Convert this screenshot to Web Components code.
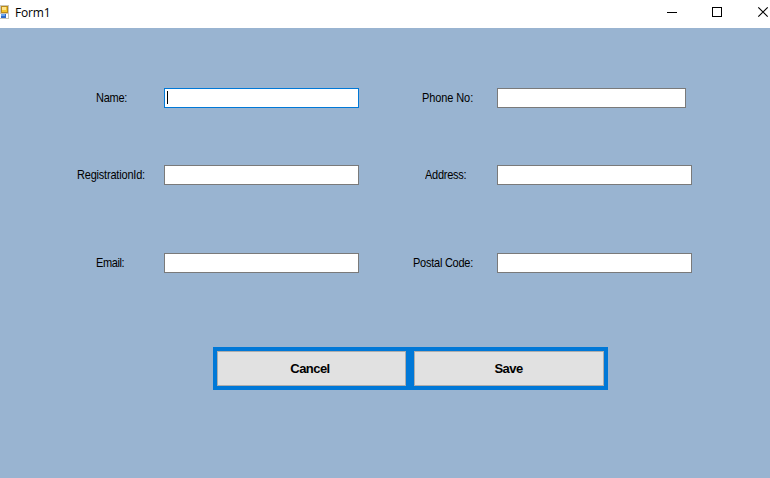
<!DOCTYPE html>
<html lang="en"><head><meta charset="utf-8"><title>Form1</title>
<style>html,body{margin:0;width:770px;height:478px;overflow:hidden;font-family:"Liberation Sans",sans-serif;color:#000}</style></head>
<body>
<form-window>
<title-bar slot="title">Form1</title-bar>
<field-row style="--top:60px">
<form-field label="Name:" style="--inset:96px;--tracking:-.25px" focused></form-field>
<form-field label="Phone No:" style="--inset:89px;--tracking:-.1px"></form-field>
</field-row>
<field-row style="--top:57px">
<form-field label="RegistrationId:" style="--inset:77px;--tracking:-.2px"></form-field>
<form-field label="Address:" style="--inset:92px;--tracking:-.25px"></form-field>
</field-row>
<field-row style="--top:68px">
<form-field label="Email:" style="--inset:96px;--tracking:-.4px"></form-field>
<form-field label="Postal Code:" style="--inset:80px;--tracking:-.25px"></form-field>
</field-row>
<button-strip>
<push-button>Cancel</push-button>
<push-button style="--shift:1px">Save</push-button>
</button-strip>
</form-window>
<script>
const define = (name, html, setup) => {
  const t = document.createElement('template');
  t.innerHTML = html;
  customElements.define(name, class extends HTMLElement {
    constructor(){ super(); this.attachShadow({mode:'open'}).append(t.content.cloneNode(true)); }
    connectedCallback(){ if (setup) setup(this, this.shadowRoot); }
  });
};
define('form-window', `<style>
:host{display:flex;flex-direction:column;width:770px;height:478px;background:#99b4d1}
main{display:flex;flex-direction:column;flex:1}
::slotted(field-row:nth-of-type(1)){--last-box:189px}
</style><slot name="title"></slot><main><slot></slot></main>`);
define('title-bar', `<style>
:host{display:flex;height:28px;background:#fff;font:12px/26px "Open Sans",sans-serif}
svg{display:block;flex:none}
.icon{margin:5px 6px 0 0}
span{flex:1;letter-spacing:-.2px}
</style>
<svg class="icon" width="9" height="14" viewBox="0 0 9 14" shape-rendering="crispEdges">
<path fill="#c9c5b8" d="M0 0h9v14H0z"/><path fill="#b98a1c" d="M1 1h7v7H1z"/><path fill="#f5c62c" d="M2 2h5v5H2z"/><path fill="#ffe58b" d="M2 2h4v3H2z"/>
<path fill="#fff" d="M0 9h8v4H0z"/><path fill="#2f6bc9" d="M1 9h5v4H1z"/><path fill="#6ca6ef" d="M1 9h4v2H1z"/></svg>
<span><slot></slot></span>
<svg width="103" height="28" viewBox="667 0 103 28" fill="none" stroke="#000">
<path d="M667 12.5h10M712.5 7.5h9v9h-9z" shape-rendering="crispEdges"/><path d="M758.3 7.3l9.4 9.4M767.7 7.3l-9.4 9.4" stroke-width="1.15"/></svg>`);
define('field-row', `<style>
:host{display:grid;grid-template-columns:333px 1fr;height:20px;margin-top:var(--top)}
::slotted(form-field:last-of-type){--box:var(--last-box,195px)}
</style><slot></slot>`);
define('form-field', `<style>
:host{display:grid;grid-template-columns:164px var(--box,195px);height:20px}
label{padding-left:var(--inset);font-size:11px;line-height:20px;letter-spacing:var(--tracking);white-space:nowrap;transform:scaleY(1.12);transform-origin:0 55%}
.box{box-sizing:border-box;height:20px;padding:2px;border:1px solid #7a7a7a;background:#fff}
:host([focused]) .box{border-color:#0078d7}
:host([focused]) .box::before{content:"";display:block;width:1px;height:13px;background:#000}
</style><label></label><div class="box"></div>`, (el, root) => {
  root.querySelector('label').textContent = el.getAttribute('label');
});
define('button-strip', `<style>
:host{box-sizing:border-box;display:grid;grid-template-columns:189px 190px;gap:8px;width:395px;height:43px;margin:74px 0 0 213px;padding:4px;background:#0078d7}
</style><slot></slot>`);
define('push-button', `<style>
:host{display:block;height:35px}
button{box-sizing:border-box;width:100%;height:100%;padding:0 3px 0 calc(var(--shift,0px)*2);border:1px solid #adadad;background:#e1e1e1;color:#000;font:bold 13px "Liberation Sans",sans-serif;letter-spacing:-.55px}
</style><button><slot></slot></button>`);
</script>
</body></html>
